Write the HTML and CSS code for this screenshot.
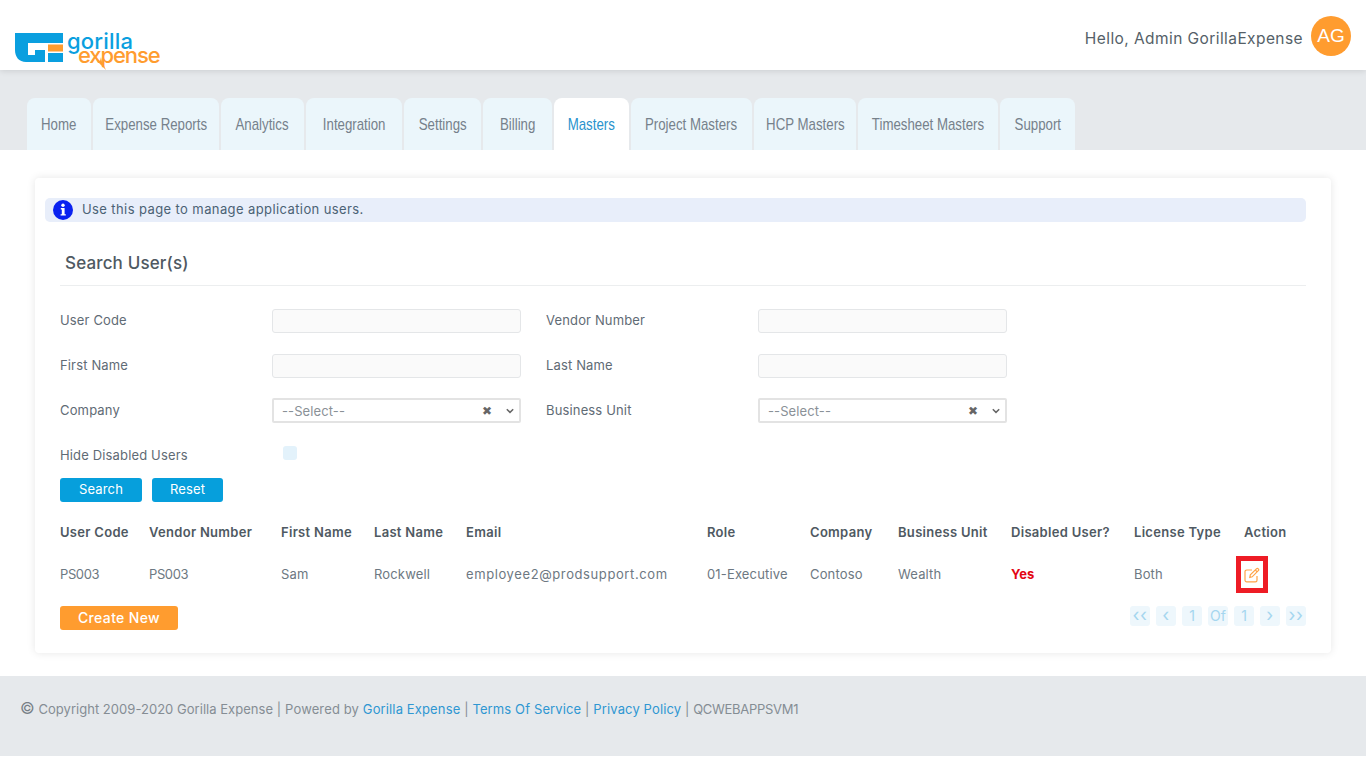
FILE: index.html
```html
<!DOCTYPE html>
<html lang="en">
<head>
<meta charset="utf-8">
<title>Gorilla Expense</title>
<link rel="stylesheet" href="styles.css">
</head>
<body>
<header class="topbar">
  <a class="logo" href="#">
    <svg class="logo-mark" width="48" height="29" viewBox="0 0 48 29">
      <path fill="#0a9fdf" d="M0 0H48V10H13V22H20V17H30V29H11C4 29 0 24 0 17Z"/>
      <rect fill="#ff9c2f" x="33" y="11.500" width="15" height="7"/>
      <rect fill="#0a9fdf" x="33" y="20" width="15" height="9"/>
    </svg>
    <span class="logo-words">
      <span class="logo-top">gorilla</span>
      <span class="logo-bottom">expense</span>
    </span>
    <svg class="logo-spark" width="12" height="14" viewBox="0 0 12 14"><path fill="#ff9c2f" d="M0 0 6 5 7 1 8 6 12 14 5 7Z"/></svg>
  </a>
  <div class="greeting">
    <span class="greeting-text">Hello, Admin GorillaExpense</span>
    <span class="avatar">AG</span>
  </div>
</header>

<nav class="tabband">
  <a class="tab" href="#"><span>Home</span></a>
  <a class="tab" href="#"><span>Expense Reports</span></a>
  <a class="tab" href="#"><span>Analytics</span></a>
  <a class="tab" href="#"><span>Integration</span></a>
  <a class="tab" href="#"><span>Settings</span></a>
  <a class="tab" href="#"><span>Billing</span></a>
  <a class="tab tab-active" href="#"><span>Masters</span></a>
  <a class="tab" href="#"><span>Project Masters</span></a>
  <a class="tab" href="#"><span>HCP Masters</span></a>
  <a class="tab" href="#"><span>Timesheet Masters</span></a>
  <a class="tab" href="#"><span>Support</span></a>
</nav>

<main class="content">
  <section class="card">
    <div class="infobar">
      <svg class="info-icon" width="20" height="20" viewBox="0 0 20 20">
        <circle cx="10" cy="10" r="10" fill="#0a22f0"/>
        <circle cx="10" cy="5.200" r="1.700" fill="#fff"/>
        <path fill="#fff" d="M7.800 8H11.600V14.200H12.800V15.600H7.600V14.200H8.800V9.400H7.800Z"/>
      </svg>
      <span>Use this page to manage application users.</span>
    </div>

    <h2 class="section-title">Search User(s)</h2>

    <form class="search-form">
      <label class="field-label">User Code</label>
      <input class="text-input" type="text">
      <label class="field-label field-right">Vendor Number</label>
      <input class="text-input" type="text">

      <label class="field-label">First Name</label>
      <input class="text-input" type="text">
      <label class="field-label field-right">Last Name</label>
      <input class="text-input" type="text">

      <label class="field-label">Company</label>
      <div class="select-box">
        <span class="select-value">--Select--</span>
        <span class="select-clear">✖</span>
        <svg class="select-caret" width="8" height="6" viewBox="0 0 8 6"><path d="M.8 1.200 4 4.400 7.200 1.200" fill="none" stroke="#666" stroke-width="1.500"/></svg>
      </div>
      <label class="field-label field-right">Business Unit</label>
      <div class="select-box">
        <span class="select-value">--Select--</span>
        <span class="select-clear">✖</span>
        <svg class="select-caret" width="8" height="6" viewBox="0 0 8 6"><path d="M.8 1.200 4 4.400 7.200 1.200" fill="none" stroke="#666" stroke-width="1.500"/></svg>
      </div>

      <label class="field-label">Hide Disabled Users</label>
      <div class="check-cell"><span class="checkbox"></span></div>
    </form>

    <div class="button-row">
      <button class="btn btn-blue btn-search" type="button">Search</button>
      <button class="btn btn-blue btn-reset" type="button">Reset</button>
    </div>

    <table class="users">
      <thead>
        <tr>
          <th class="c1">User Code</th>
          <th class="c2">Vendor Number</th>
          <th class="c3">First Name</th>
          <th class="c4">Last Name</th>
          <th class="c5">Email</th>
          <th class="c6">Role</th>
          <th class="c7">Company</th>
          <th class="c8">Business Unit</th>
          <th class="c9">Disabled User?</th>
          <th class="c10">License Type</th>
          <th class="c11">Action</th>
        </tr>
      </thead>
      <tbody>
        <tr>
          <td class="cell-code">PS003</td>
          <td class="cell-code">PS003</td>
          <td>Sam</td>
          <td>Rockwell</td>
          <td class="cell-email">employee2@prodsupport.com</td>
          <td>01-Executive</td>
          <td>Contoso</td>
          <td>Wealth</td>
          <td class="flag-yes">Yes</td>
          <td>Both</td>
          <td>
            <a class="edit-link" href="#">
              <svg width="16" height="16" viewBox="0 0 16 16" fill="none" stroke="#ffa347" stroke-width="1.200">
                <path d="M13 9V13.200C13 14.200 12.300 14.800 11.400 14.800H2.700C1.700 14.800 1 14.100 1 13.200V4.600C1 3.700 1.700 3 2.700 3H8"/>
                <path d="M5.800 10.400 6.300 7.900 12.400 1.800C13 1.200 13.700 1.200 14.300 1.800 14.900 2.400 14.900 3.100 14.300 3.700L8.200 9.800Z"/>
                <path d="M11.300 3 13.200 4.900"/>
              </svg>
            </a>
          </td>
        </tr>
      </tbody>
    </table>

    <div class="table-foot">
      <button class="btn btn-orange" type="button">Create New</button>
      <div class="pager">
        <span class="page-btn page-arrow">‹‹</span>
        <span class="page-btn page-arrow">‹</span>
        <span class="page-btn">1</span>
        <span class="page-btn">Of</span>
        <span class="page-btn">1</span>
        <span class="page-btn page-arrow">›</span>
        <span class="page-btn page-arrow">››</span>
      </div>
    </div>
  </section>
</main>

<footer class="footer">
  <span class="copy-mark">©</span><span class="legal"> Copyright 2009-2020 Gorilla Expense</span> | Powered by <a href="#">Gorilla Expense</a> | <a href="#">Terms Of Service</a> | <a href="#">Privacy Policy</a> | <span class="host">QCWEBAPPSVM1</span>
</footer>
</body>
</html>
```
FILE: styles.css
```css
* { box-sizing: border-box; }
html, body { margin: 0; padding: 0; }
body {
  width: 1366px;
  height: 757px;
  overflow: hidden;
  background: #fff;
  font-family: Inter, "Open Sans", sans-serif;
  font-size: 13px;
  color: #5f6b75;
}
a { text-decoration: none; }

.topbar {
  position: relative;
  z-index: 2;
  height: 70px;
  background: #fff;
  box-shadow: 0 1px 6px rgba(0,0,0,.12);
  display: flex;
  align-items: flex-start;
  justify-content: space-between;
  padding: 16px 15px 0 15px;
}
.logo { position: relative; display: flex; align-items: flex-start; margin-top: 17px; }
.logo-mark { display: block; }
.logo-words {
  display: flex;
  flex-direction: column;
  margin-top: -3px;
  font-family: Inter, sans-serif;
  font-size: 22px;
  font-weight: 500;
  line-height: 11px;
}
.logo-top { color: #0a9fdf; margin-left: 4px; height: 11px; padding-top: 6px; letter-spacing: .2px; }
.logo-bottom { color: #ff9c2f; margin-left: 15px; padding-top: 9px; letter-spacing: -1.100px; }
.logo-spark { position: absolute; left: 79px; top: 23px; }

.greeting {
  display: flex;
  align-items: center;
  gap: 8px;
  font-size: 15.500px;
  letter-spacing: .42px;
  color: #555f68;
}
.greeting-text { margin-top: 4px; }
.avatar {
  width: 40px;
  height: 40px;
  border-radius: 50%;
  background: #ff9c2f;
  color: #fff;
  font-family: "Liberation Sans", sans-serif;
  font-size: 19px;
  letter-spacing: 0;
  display: flex;
  align-items: center;
  justify-content: center;
}

.tabband {
  height: 80px;
  background: #e6e9ec;
  display: grid;
  grid-template-columns: 64px 126px 83px 96px 77px 69px 75px 121px 102px 140px 75px;
  grid-template-rows: 52px;
  align-content: end;
  column-gap: 2px;
  padding-left: 27px;
}
.tab {
  display: flex;
  align-items: center;
  justify-content: center;
  padding-top: 1px;
  background: #ebf6fb;
  border-radius: 8px 8px 0 0;
  color: #76818b;
  font-family: "Liberation Sans", sans-serif;
  font-size: 17px;
  white-space: nowrap;
  overflow: hidden;
}
.tab span { flex: none; transform: scaleX(.78); }
.tab-active { background: #fff; color: #2a93cd; }

.content { padding: 28px 35px 23px; }
.card {
  width: 1296px;
  height: 475px;
  background: #fff;
  border-radius: 4px;
  box-shadow: 0 0 8px rgba(0,0,0,.1);
  padding: 20px 25px 0 10px;
}
.infobar {
  height: 24px;
  display: flex;
  align-items: center;
  gap: 9px;
  padding-left: 8px;
  background: #e8eefa;
  border-radius: 5px;
  color: #4b6275;
  letter-spacing: .4px;
}
.infobar span { margin-top: -2px; }
.info-icon { display: block; }
.section-title {
  margin: 0 0 0 15px;
  padding: 29px 0 11px 5px;
  height: 64px;
  font-size: 17px;
  line-height: 24px;
  font-weight: 500;
  letter-spacing: .15px;
  color: #4f5962;
  border-bottom: 1px solid #eceeef;
}

.search-form {
  margin: 23px 0 0 15px;
  display: grid;
  grid-template-columns: 212px 249px 237px 249px;
  grid-auto-rows: 24px;
  row-gap: 21px;
  align-items: center;
  width: 947px;
}
.field-label { font-size: 13px; letter-spacing: .15px; color: #5f6b75; margin-top: -2px; }
.field-right { margin-left: 25px; }
.text-input {
  width: 249px;
  height: 24px;
  border: 1px solid #e4e6e8;
  border-radius: 3px;
  background: #fafafa;
  outline: 0;
}
.select-box {
  align-self: start;
  margin-top: -1px;
  width: 249px;
  height: 25px;
  border: 2px solid #e3e3e3;
  border-radius: 2px;
  background: #fff;
  display: flex;
  align-items: center;
  padding: 0 5px 0 8px;
  color: #8a9197;
}
.select-value { flex: 1; letter-spacing: .1px; }
.select-clear { font-size: 12px; color: #666; margin-right: 14px; font-family: "DejaVu Sans", sans-serif; }
.select-caret { display: block; }
.check-cell { padding-left: 11px; margin-top: -7px; }
.checkbox {
  display: block;
  width: 14px;
  height: 14px;
  border-radius: 3px;
  background: #e3f2fb;
}

.button-row {
  display: flex;
  gap: 10px;
  margin: 10px 0 0 15px;
}
.btn {
  height: 24px;
  border: 0;
  border-radius: 3px;
  color: #fff;
  font-family: inherit;
  font-size: 13px;
  letter-spacing: .15px;
  padding: 0 0 2px;
}
.btn-blue { background: #069fdc; }
.btn-search { width: 82px; }
.btn-reset { width: 71px; }
.btn-orange { background: #ff9c2f; width: 118px; font-size: 14px; font-weight: 500; letter-spacing: .35px; }

.users {
  margin: 17px 0 0 15px;
  width: 1246px;
  border-collapse: collapse;
  table-layout: fixed;
}
.users th, .users td { padding: 0; text-align: left; }
.users th {
  height: 25px;
  font-weight: 600;
  color: #4f5962;
  letter-spacing: .3px;
}
.users td {
  height: 49px;
  padding-top: 10px;
  color: #6d7882;
  letter-spacing: .15px;
  vertical-align: middle;
}
.c1 { width: 89px; }
.c2 { width: 132px; }
.c3 { width: 93px; }
.c4 { width: 92px; }
.c5 { width: 241px; }
.c6 { width: 103px; }
.c7 { width: 88px; }
.c8 { width: 113px; }
.c9 { width: 123px; }
.c10 { width: 110px; }
.c11 { width: 62px; }
.users td.cell-code { letter-spacing: -.4px; }
.users td.cell-email { letter-spacing: .6px; }
.users td.flag-yes { color: #e30613; font-weight: 700; }
.edit-link {
  display: flex;
  align-items: center;
  justify-content: center;
  width: 32px;
  height: 37px;
  margin: 2px 0 0 -8px;
  border: 5px solid #ee1c25;
}

.table-foot {
  margin: 13px 0 0 15px;
  width: 1246px;
  display: flex;
  justify-content: space-between;
  align-items: flex-start;
}
.pager { display: flex; gap: 6px; }
.page-btn {
  width: 20px;
  height: 20px;
  border-radius: 3px;
  background: #eef7fc;
  color: #a5d6ef;
  display: flex;
  align-items: center;
  justify-content: center;
  font-size: 14px;
  padding-bottom: 1px;
}
.page-arrow { font-size: 18px; padding-bottom: 3px; letter-spacing: .5px; }

.footer {
  height: 80px;
  background: #e6e9ec;
  padding: 24px 0 0 20px;
  font-size: 13px;
  line-height: 18px;
  letter-spacing: .13px;
  color: #858d94;
}
.footer a { color: #2f97d2; }
.copy-mark { font-size: 16px; line-height: 16px; color: #777f86; }
.legal { letter-spacing: .03px; }
.host { letter-spacing: -.3px; }
```
